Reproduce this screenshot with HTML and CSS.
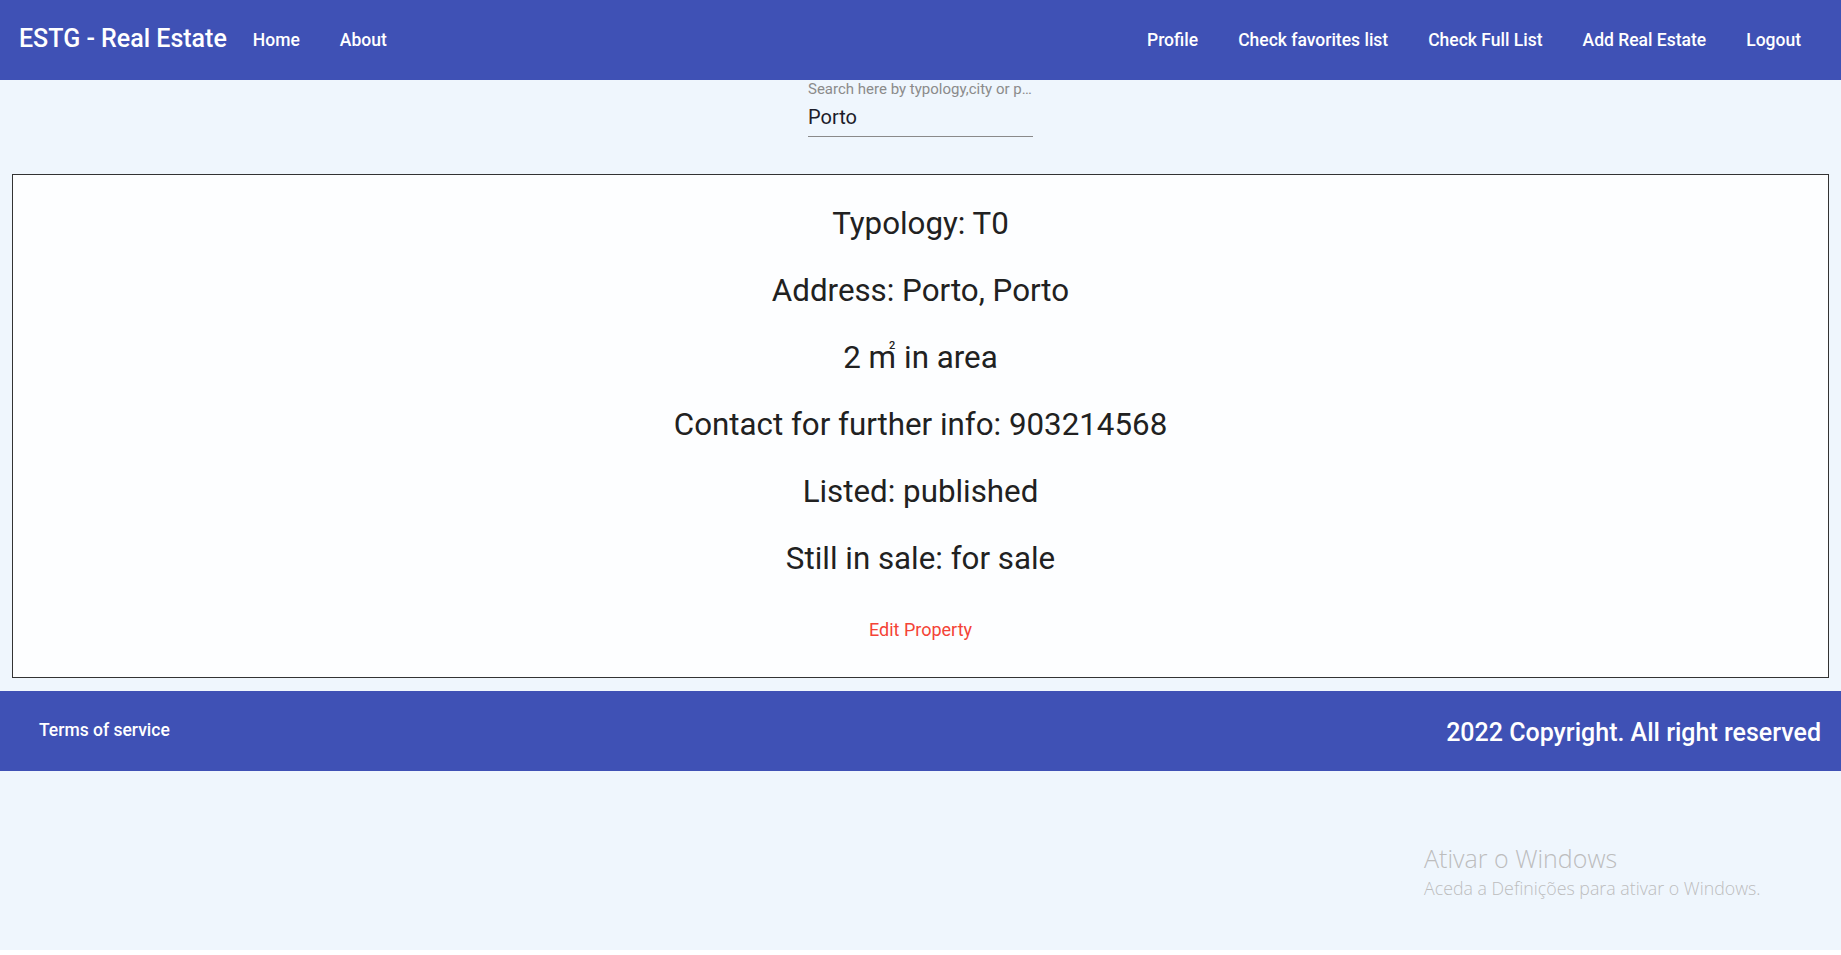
FILE: index.html
```html
<!DOCTYPE html>
<html lang="en">
<head>
<meta charset="utf-8">
<title>ESTG - Real Estate</title>
<link rel="stylesheet" href="styles.css">
</head>
<body>
<div class="app">
  <header class="topbar">
    <div class="left">
      <span class="brand">ESTG - Real Estate</span>
      <a class="link">Home</a>
      <a class="link">About</a>
    </div>
    <nav class="right">
      <a class="rlink">Profile</a>
      <a class="rlink">Check favorites list</a>
      <a class="rlink">Check Full List</a>
      <a class="rlink">Add Real Estate</a>
      <a class="rlink">Logout</a>
    </nav>
  </header>

  <section class="search">
    <div class="field">
      <label class="label">Search here by typology,city or price</label>
      <div class="value">Porto</div>
    </div>
  </section>

  <main class="card">
    <p class="line">Typology: T0</p>
    <p class="line">Address: Porto, Porto</p>
    <p class="line">2 m<sup class="sq">2</sup> in area</p>
    <p class="line">Contact for further info: 903214568</p>
    <p class="line">Listed: published</p>
    <p class="line">Still in sale: for sale</p>
    <button class="edit">Edit Property</button>
  </main>

  <footer class="footer">
    <span class="terms">Terms of service</span>
    <span class="copy">2022 Copyright. All right reserved</span>
  </footer>

  <div class="watermark">
    <div class="wm1">Ativar o Windows</div>
    <div class="wm2">Aceda a Definições para ativar o Windows.</div>
  </div>
</div>
</body>
</html>
```

FILE: styles.css
```css
html, body {
  margin: 0;
  padding: 0;
  background: #ffffff;
}

body {
  font-family: Roboto, "Liberation Sans", Arial, sans-serif;
  color: #212121;
}

.app {
  position: relative;
  height: 950px;
  background: #eff6fd;
  overflow: hidden;
}

.topbar {
  height: 80px;
  background: #3f51b5;
  display: flex;
  align-items: center;
  justify-content: space-between;
  color: #ffffff;
}

.left {
  display: flex;
  align-items: center;
  padding-left: 19px;
}

.brand {
  font-size: 25px;
  font-weight: 500;
  line-height: 28px;
  margin-top: -3px;
  margin-right: 26px;
}

.link {
  font-size: 17.5px;
  font-weight: 500;
  line-height: 20px;
  margin-right: 40px;
  cursor: pointer;
}

.right {
  display: flex;
  align-items: center;
  gap: 40px;
  padding-right: 40px;
}

.rlink {
  font-size: 17.5px;
  font-weight: 500;
  line-height: 20px;
  cursor: pointer;
}

.search {
  display: flex;
  justify-content: center;
  padding-top: 1px;
}

.field {
  width: 225px;
  border-bottom: 1px solid #8a8a8a;
  padding-bottom: 7px;
}

.label {
  display: block;
  font-size: 15px;
  line-height: 17px;
  color: #8b8b8b;
  white-space: nowrap;
  overflow: hidden;
  text-overflow: ellipsis;
}

.value {
  margin-top: 7px;
  font-size: 20px;
  line-height: 24px;
  color: #1c1c2a;
}

.card {
  margin: 37px 12px 0;
  height: 502px;
  box-sizing: content-box;
  border: 1px solid #333333;
  background: #fdfeff;
  padding: 0;
  display: flex;
  flex-direction: column;
  align-items: center;
}

.line {
  margin: 0 0 31px;
  font-size: 31.3px;
  line-height: 36px;
  color: #212121;
}

.line:first-child {
  margin-top: 31px;
}

.line:nth-child(6) {
  margin-bottom: 34px;
}

.sq {
  font-size: 11px;
  font-weight: 500;
  line-height: 0;
  vertical-align: 0;
  position: relative;
  top: -19px;
  margin-left: -7px;
  margin-right: 1px;
}

.edit {
  height: 36px;
  border: none;
  background: transparent;
  font-family: Roboto, "Liberation Sans", Arial, sans-serif;
  font-size: 18px;
  font-weight: 400;
  color: #f44336;
  padding: 0 16px;
  cursor: pointer;
}

.footer {
  margin-top: 13px;
  height: 80px;
  background: #3f51b5;
  color: #ffffff;
  display: flex;
  align-items: center;
  justify-content: space-between;
  padding: 0 20px 0 39px;
}

.terms {
  font-size: 17.5px;
  font-weight: 500;
  margin-top: -2px;
}

.copy {
  font-size: 25px;
  font-weight: 500;
  margin-top: 2px;
}

.watermark {
  position: absolute;
  left: 1424px;
  top: 842px;
  color: #bdbdbd;
  font-family: "Open Sans", "Noto Sans", sans-serif;
}

.wm1 {
  font-size: 25px;
  font-weight: 300;
  line-height: 32px;
}

.wm2 {
  font-size: 17.8px;
  font-weight: 300;
  line-height: 24px;
  margin-top: 2px;
}
```
